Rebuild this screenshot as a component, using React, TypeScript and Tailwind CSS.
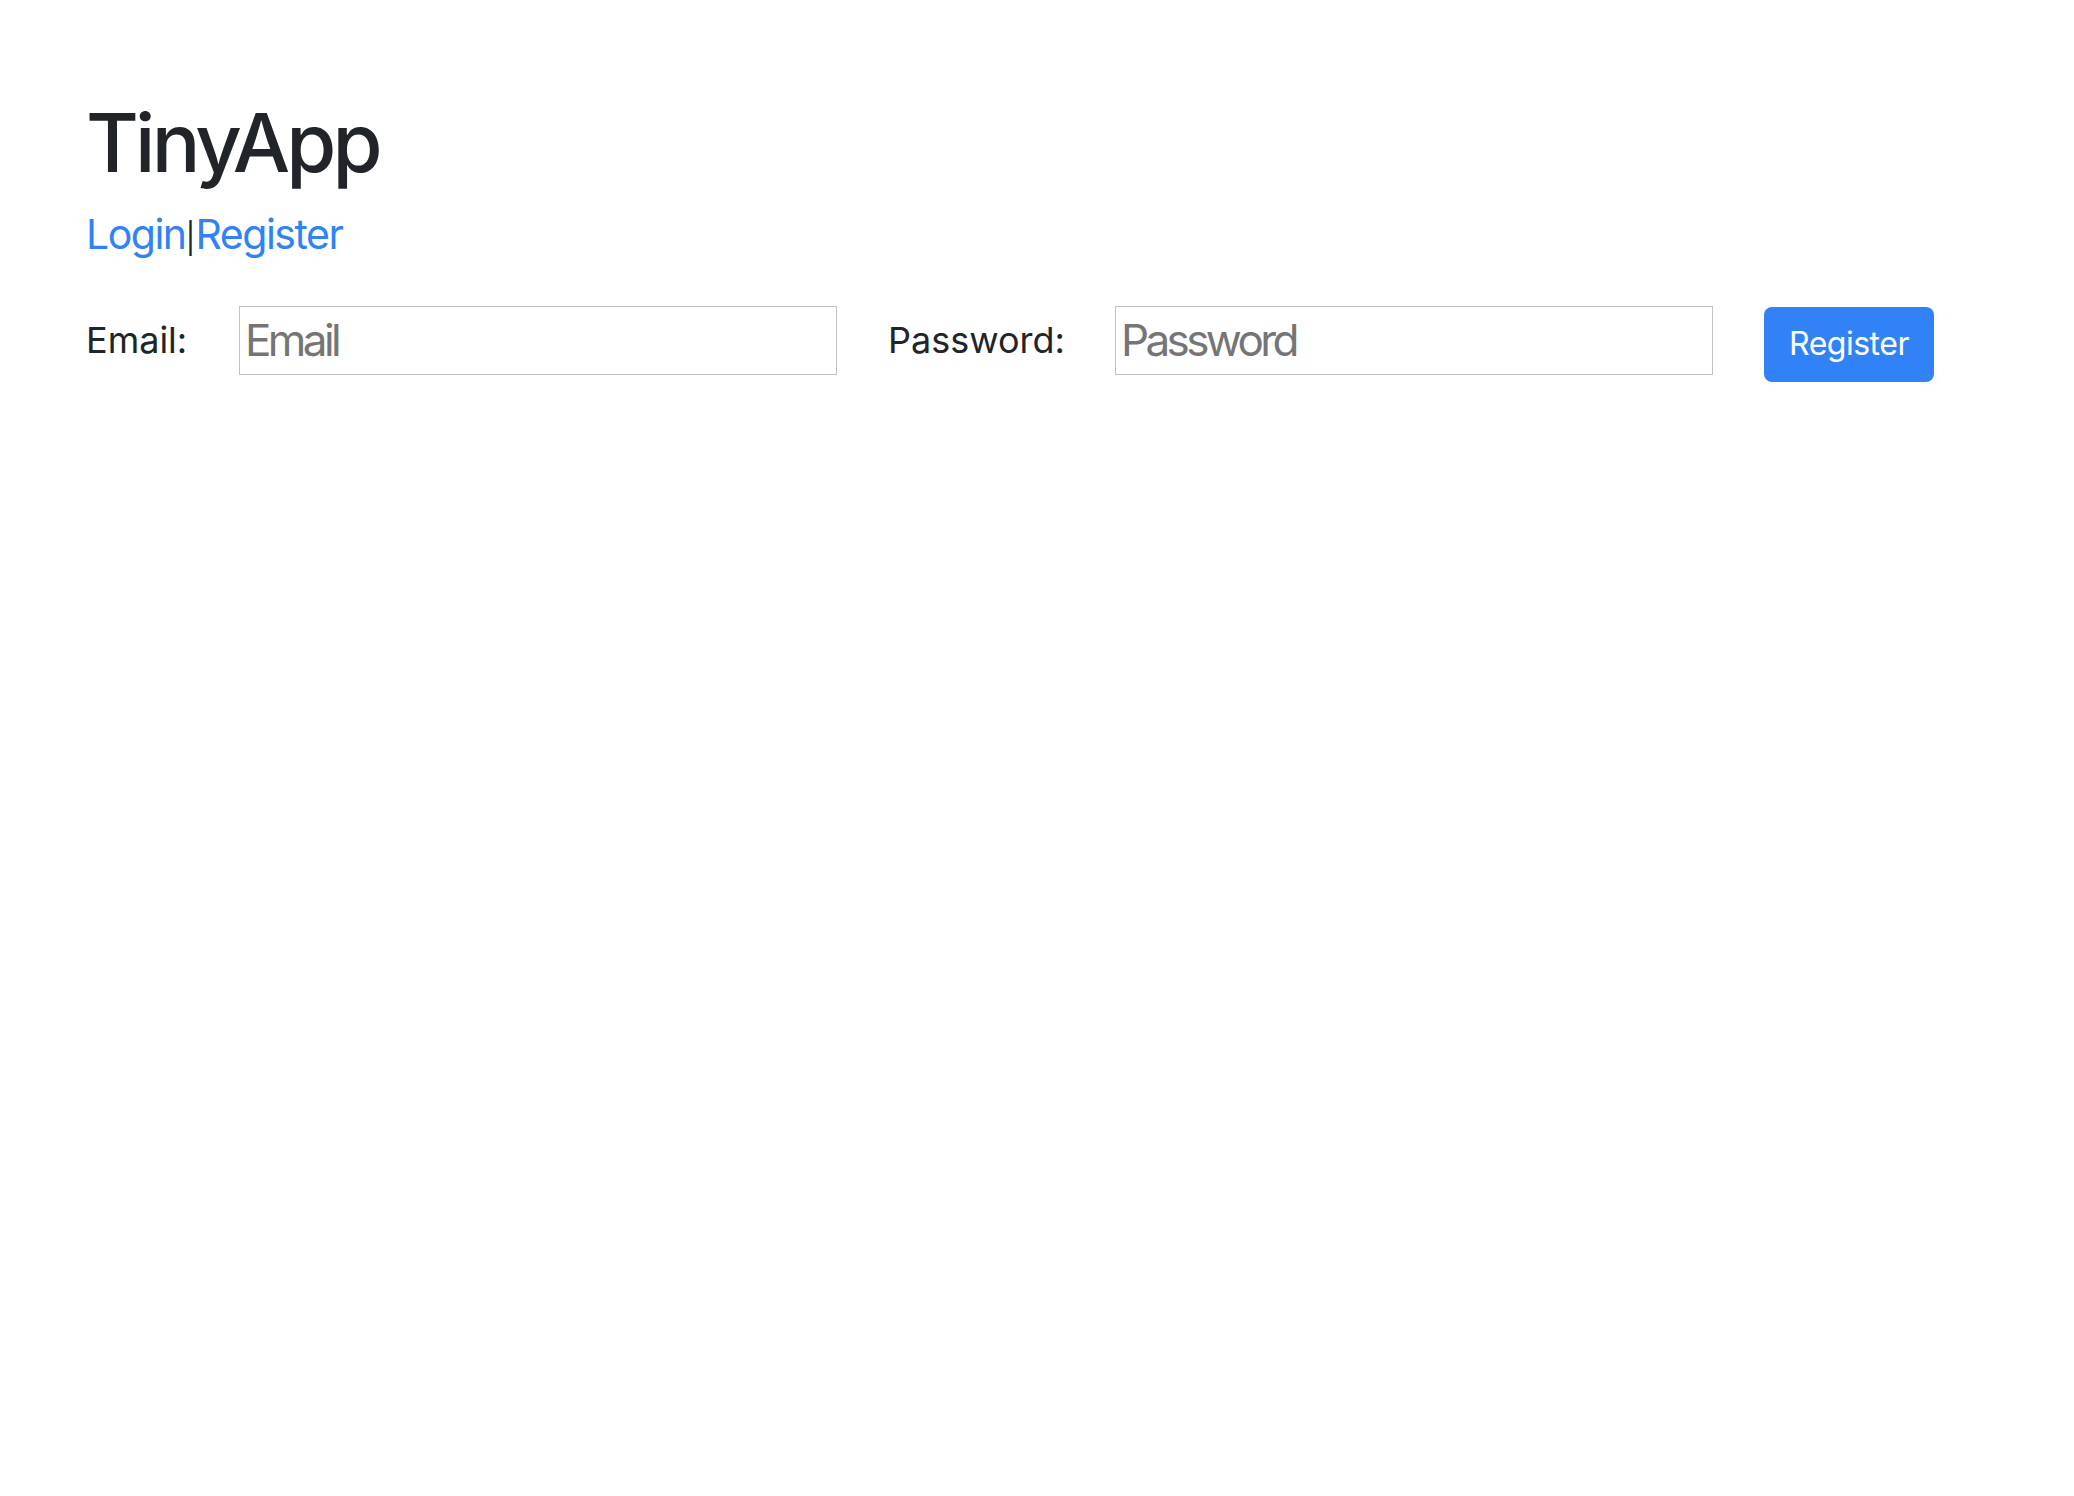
import React from "react";

export default function App() {
  return (
    <div
      className="min-h-screen bg-white pl-[86px] pt-[95px] text-[#212529]"
      style={{ fontFamily: "Inter, 'Noto Sans', sans-serif" }}
    >
      <h1 className="m-0 text-[81px] font-medium leading-[1.2] tracking-[-3.8px]">TinyApp</h1>
      <div className="mt-[12px] text-[41px] leading-[1.5] tracking-[-1.5px]">
        <a href="#" className="text-[#3182f6] no-underline">Login</a>
        <span className="text-[30px] tracking-normal">|</span>
        <a href="#" className="text-[#3182f6] no-underline">Register</a>
      </div>
      <form className="mt-[40px] flex items-start gap-[51px]" onSubmit={(e) => e.preventDefault()}>
        <label className="flex h-[69px] w-[102px] items-center text-[36px]">Email:</label>
        <input
          type="text"
          placeholder="Email"
          className="h-[69px] w-[598px] border border-[#c2c2c2] px-[5px] text-[44px] tracking-[-3.6px] text-[#212529] outline-none placeholder:text-[#757575]"
        />
        <label className="flex h-[69px] w-[176px] items-center text-[36px]">Password:</label>
        <input
          type="password"
          placeholder="Password"
          className="h-[69px] w-[598px] border border-[#c2c2c2] px-[5px] text-[44px] tracking-[-3.6px] text-[#212529] outline-none placeholder:text-[#757575]"
        />
        <button
          type="submit"
          className="mt-[1px] flex h-[75px] w-[170px] items-center justify-center rounded-[8px] bg-[#3182f6] text-[32px] tracking-[-0.5px] text-white"
        >
          Register
        </button>
      </form>
    </div>
  );
}
